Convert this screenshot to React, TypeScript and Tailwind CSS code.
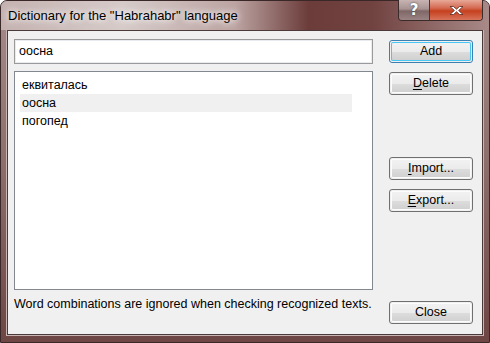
import React from "react";

const font = { fontFamily: '"Liberation Sans", Arial, sans-serif' };

function WinButton({
  label,
  hot,
  isDefault,
  className = "",
}: {
  label: string;
  hot?: number;
  isDefault?: boolean;
  className?: string;
}) {
  const text =
    hot === undefined ? (
      label
    ) : (
      <>
        {label.slice(0, hot)}
        <span className="underline underline-offset-2">{label[hot]}</span>
        {label.slice(hot + 1)}
      </>
    );
  return (
    <div
      className={`h-[23px] w-[84px] rounded-[3px] border p-px ${
        isDefault ? "border-[#3c7fb1]" : "border-[#707070]"
      } ${className}`}
    >
      <div
        className={`flex h-full w-full items-center justify-center rounded-[2px] bg-[linear-gradient(180deg,#f2f2f2_0%,#ebebeb_50%,#dddddd_51%,#cfcfcf_100%)] text-[12.5px] text-black ${
          isDefault ? "shadow-[inset_0_0_0_1px_#48c7f5]" : "shadow-[inset_0_0_0_1px_#fcfcfc]"
        }`}
      >
        {text}
      </div>
    </div>
  );
}

export default function App() {
  const words = ["еквиталась", "оосна", "погопед"];
  return (
    <div className="h-[343px] w-[490px] overflow-hidden bg-white" style={font}>
      <div className="relative flex h-[343px] w-[490px] flex-col rounded-t-[7px] border border-[#3a2828] bg-[linear-gradient(180deg,#a48c8a_0%,#8e706e_45%,#6e4644_100%)]">
        {/* title bar */}
        <div className="relative flex h-[29px] shrink-0 items-center rounded-t-[6px] bg-[linear-gradient(90deg,#c4b2b0_0%,#d6cbc9_25%,#bca4a2_48%,#6b3c3a_63%,#704240_76%,#a88a88_100%)] pl-[7px]">
          <span className="text-[13px] text-black [text-shadow:0_0_6px_#ffffff,0_0_10px_#ffffff]">
            Dictionary for the "Habrahabr" language
          </span>
          {/* caption buttons */}
          <div className="absolute right-[6px] top-[-1px] flex h-[21px] overflow-hidden rounded-b-[4px] border border-t-0 border-[#3b2a2a]">
            <div className="flex w-[31px] items-center justify-center border-r border-[#4a3535] bg-[linear-gradient(180deg,#c7b4b3_0%,#a89392_45%,#7f6766_55%,#9a8483_100%)]">
              <span className="text-[15px] font-bold text-white [text-shadow:0_0_2px_#333]" style={{ fontFamily: '"DejaVu Sans", sans-serif' }}>
                ?
              </span>
            </div>
            <div className="flex w-[52px] items-center justify-center bg-[linear-gradient(180deg,#e8a898_0%,#d46a52_40%,#c5401f_55%,#d8745a_100%)]">
              <svg width="17" height="11" viewBox="0 0 17 11">
                <path
                  d="M2 1.5h3.5L8.5 4.2 11.5 1.5H15L10.6 5.5 15 9.5h-3.5L8.5 6.8 5.5 9.5H2L6.4 5.5Z"
                  fill="#ffffff"
                  stroke="#5a2a22"
                  strokeWidth="0.8"
                  strokeLinejoin="round"
                />
              </svg>
            </div>
          </div>
        </div>

        {/* client area */}
        <div className="mx-[6px] mb-[7px] flex flex-1 border border-[#4a3a3a] shadow-[0_0_0_1px_#c8b4b2]">
          <div className="flex flex-1 bg-[#f0f0f0] pl-[6px] pr-[9px] pt-[8px]">
            <div className="flex w-[359px] flex-col">
              <div className="flex h-[25px] items-center border border-[#9a9a9a] bg-white pl-[4px] shadow-[inset_0_0_0_1px_#e8ebef]">
                <span className="text-[12.5px] text-black">оосна</span>
              </div>
              <div className="mt-[7px] h-[219px] border border-[#828790] bg-white px-[5px] pt-[4px]">
                {words.map((w, i) => (
                  <div
                    key={w}
                    className={`flex h-[18px] w-[332px] items-center pl-[2px] text-[12.5px] text-black ${
                      i === 1 ? "bg-[#f0f0f0]" : ""
                    }`}
                  >
                    {w}
                  </div>
                ))}
              </div>
              <div className="mt-[5px] text-[12.5px] text-black">
                Word combinations are ignored when checking recognized texts.
              </div>
            </div>
            <div className="ml-auto flex flex-col pt-px">
              <WinButton label="Add" isDefault />
              <WinButton label="Delete" hot={0} className="mt-[9px]" />
              <WinButton label="Import..." hot={0} className="mt-[62px]" />
              <WinButton label="Export..." hot={0} className="mt-[9px]" />
              <WinButton label="Close" className="mt-[89px]" />
            </div>
          </div>
        </div>
      </div>
    </div>
  );
}
